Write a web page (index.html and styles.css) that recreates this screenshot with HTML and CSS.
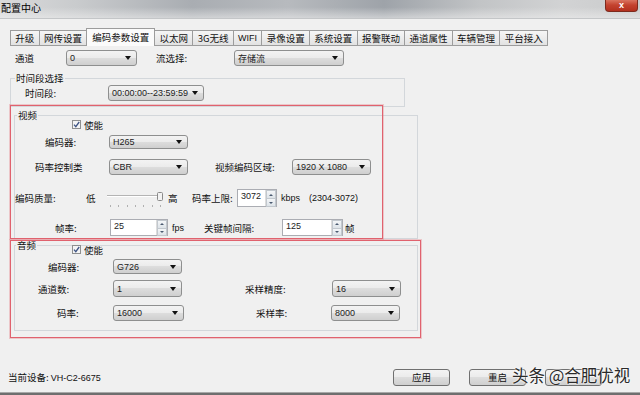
FILE: index.html
```html
<!DOCTYPE html>
<html lang="zh-CN">
<head>
  <meta charset="UTF-8" />
  <title>配置中心</title>
  <link rel="stylesheet" href="styles.css">
</head>
<body>

  <!-- ========== TITLE BAR ========== -->
  <div class="titlebar">
    <span class="title">配置中心</span>
    <span class="close">x</span>
  </div>

  <!-- ========== TABS ========== -->
  <div class="tabs">
    <span class="tab">升级</span>
    <span class="tab">网传设置</span>
    <span class="tab active">编码参数设置</span>
    <span class="tab">以太网</span>
    <span class="tab">3G无线</span>
    <span class="tab en">WIFI</span>
    <span class="tab">录像设置</span>
    <span class="tab">系统设置</span>
    <span class="tab">报警联动</span>
    <span class="tab">通道属性</span>
    <span class="tab">车辆管理</span>
    <span class="tab">平台接入</span>
  </div>

  <div class="panel">
    <!-- channel / stream -->
    <div class="row h16 mt4">
      <span class="lbl ml15 w51">通道</span>
      <div class="combo w71"><span>0</span><i class="arrow"></i></div>
      <span class="lbl ml19 w78">流选择:</span>
      <div class="combo w110"><span>存储流</span><i class="arrow"></i></div>
    </div>

    <!-- time range -->
    <fieldset class="group g-time">
      <legend>时间段选择</legend>
      <div class="row h16 mt1">
        <span class="lbl ml14 w83">时间段:</span>
        <div class="combo w96"><span>00:00:00--23:59:59</span><i class="arrow"></i></div>
      </div>
    </fieldset>

    <!-- video -->
    <fieldset class="group g-video">
      <legend>视频</legend>
      <div class="row h9">
        <svg class="chk ml57" viewBox="0 0 9 9"><rect x="0.5" y="0.5" width="8" height="8" fill="#f4f4f4" stroke="#8e8f8f"/><path d="M2 4.6 L3.8 6.6 L7.2 2" fill="none" stroke="#3e5484" stroke-width="1.3"/></svg>
        <span class="lbl ml3">使能</span>
      </div>
      <div class="row h14 mt6">
        <span class="lbl ml30 w64">编码器:</span>
        <div class="combo w79"><span>H265</span><i class="arrow"></i></div>
      </div>
      <div class="row h16 mt10">
        <span class="lbl ml20 w74">码率控制类</span>
        <div class="combo w79"><span>CBR</span><i class="arrow"></i></div>
        <span class="lbl ml27 w77">视频编码区域:</span>
        <div class="combo w79"><span>1920 X 1080</span><i class="arrow"></i></div>
      </div>
      <div class="row h18 mt14">
        <span class="lbl w71">编码质量:</span>
        <span class="lbl w21">低</span>
        <svg class="slider" width="56" height="18" viewBox="0 0 56 18">
          <line x1="0" y1="6.5" x2="52" y2="6.5" stroke="#b4b4b4"/>
          <line x1="0" y1="7.5" x2="52" y2="7.5" stroke="#ffffff"/>
          <g fill="#b0b0b0">
            <rect x="3" y="16" width="1" height="2"/><rect x="11" y="16" width="1" height="2"/>
            <rect x="20" y="16" width="1" height="2"/><rect x="28" y="16" width="1" height="2"/>
            <rect x="36" y="16" width="1" height="2"/><rect x="45" y="16" width="1" height="2"/>
            <rect x="53" y="16" width="1" height="2"/>
          </g>
          <rect x="50.5" y="3.5" width="5" height="8" rx="1" fill="#f2f2f2" stroke="#8a8a8a"/>
        </svg>
        <span class="lbl ml5 w24">高</span>
        <span class="lbl w45">码率上限:</span>
        <div class="spin w40"><span class="val">3072</span><span class="btns"><i class="up"></i><i class="down"></i></span></div>
        <span class="lbl en ml4">kbps</span>
        <span class="lbl en ml9">(2304-3072)</span>
      </div>
      <div class="row h17 mt12">
        <span class="lbl ml40 w55">帧率:</span>
        <div class="spin w58"><span class="val">25</span><span class="btns"><i class="up"></i><i class="down"></i></span></div>
        <span class="lbl en ml4 w32">fps</span>
        <span class="lbl w78">关键帧间隔:</span>
        <div class="spin w61"><span class="val">125</span><span class="btns"><i class="up"></i><i class="down"></i></span></div>
        <span class="lbl ml2">帧</span>
      </div>
    </fieldset>

    <!-- audio -->
    <fieldset class="group g-audio">
      <legend>音频</legend>
      <div class="row h9 mtn5">
        <svg class="chk ml57" viewBox="0 0 9 9"><rect x="0.5" y="0.5" width="8" height="8" fill="#f4f4f4" stroke="#8e8f8f"/><path d="M2 4.6 L3.8 6.6 L7.2 2" fill="none" stroke="#3e5484" stroke-width="1.3"/></svg>
        <span class="lbl ml3">使能</span>
      </div>
      <div class="row h15 mt5">
        <span class="lbl ml33 w65">编码器:</span>
        <div class="combo w69"><span>G726</span><i class="arrow"></i></div>
      </div>
      <div class="row h17 mt6">
        <span class="lbl ml23 w75">通道数:</span>
        <div class="combo w69"><span>1</span><i class="arrow"></i></div>
        <span class="lbl ml63 w87">采样精度:</span>
        <div class="combo w69"><span>16</span><i class="arrow"></i></div>
      </div>
      <div class="row h16 mt8">
        <span class="lbl ml42 w56">码率:</span>
        <div class="combo w71"><span>16000</span><i class="arrow"></i></div>
        <span class="lbl ml72 w75">采样率:</span>
        <div class="combo w69"><span>8000</span><i class="arrow"></i></div>
      </div>
    </fieldset>

    <!-- footer -->
    <div class="row h17 footer">
      <span class="lbl ml8 status">当前设备: <span class="en">VH-C2-6675</span></span>
      <span class="btn">应用</span>
      <span class="btn">重启</span>
      <span class="btn"></span>
    </div>
  </div>

  <div class="bottom-bar"></div>

  <!-- annotation boxes + watermark (overlays) -->
  <div class="mark mark-video"></div>
  <div class="mark mark-audio"></div>
  <div class="watermark">头条 @合肥优视</div>

</body>
</html>
```

FILE: styles.css
```css
body {
  margin: 0;
  width: 640px;
  height: 395px;
  overflow: hidden;
  position: relative;
  background: #f0f0f0;
  font-family: "Noto Sans CJK SC", sans-serif;
  font-size: 9.5px;
  color: #111;
}
.en { font-family: "Liberation Sans", "Noto Sans CJK SC", sans-serif; font-size: 9px; }

/* ---------- TITLE BAR ---------- */
.titlebar {
  height: 18px;
  display: flex;
  align-items: flex-start;
  border-bottom: 1px solid #c4c6c8;
  background:
    linear-gradient(to bottom, rgba(255,255,255,0) 40%, rgba(240,240,240,.55) 100%),
    linear-gradient(to right, #d9dadb 0, #c9cbcd 12%, #a9adb2 30%, #b7babe 45%, #9ea3a9 60%, #c2c4c6 75%, #d2d3d4 88%, #c9cacb 100%);
}
.title { font-size: 10px; line-height: 16px; padding-left: 1px; color: #000; }
.close {
  margin-left: auto;
  margin-right: 2px;
  width: 33px;
  height: 12px;
  box-sizing: border-box;
  border: 1px solid #7d2a1d;
  border-top: none;
  border-radius: 0 0 4px 4px;
  background: linear-gradient(#d9735f, #c4432f 45%, #b3301e 100%);
  color: #fff;
  font: bold 9px/10px "Liberation Sans", sans-serif;
  text-align: center;
}

/* ---------- TABS ---------- */
.tabs { display: flex; align-items: flex-end; height: 18px; margin-top: 9px; padding-left: 10px; }
.tab {
  height: 16px;
  box-sizing: border-box;
  padding: 0 4.3px;
  margin-right: -1px;
  border: 1px solid #9c9c9c;
  line-height: 14px;
  white-space: nowrap;
  background: linear-gradient(#f6f6f6, #e2e2e2);
}
.tab.en { font-size: 9px; }
.tab.active { height: 18px; padding: 0 5px; line-height: 16px; background: #fbfbfb; border-bottom: none; position: relative; z-index: 1; }

/* ---------- ROWS ---------- */
.row { display: flex; align-items: center; }
.row > * { flex-shrink: 0; }
.lbl { line-height: 12px; white-space: nowrap; }

.h9 { height: 9px; } .h14 { height: 14px; } .h15 { height: 15px; } .h16 { height: 16px; }
.h17 { height: 17px; } .h18 { height: 18px; }
.mt1 { margin-top: 1px; } .mt4 { margin-top: 4px; } .mt5 { margin-top: 5px; } .mt6 { margin-top: 6px; }
.mt8 { margin-top: 8px; } .mt10 { margin-top: 10px; } .mt12 { margin-top: 12px; } .mt14 { margin-top: 14px; }
.mtn5 { margin-top: -5px; }
.ml2 { margin-left: 2px; } .ml3 { margin-left: 3px; } .ml4 { margin-left: 4px; } .ml5 { margin-left: 5px; }
.ml8 { margin-left: 8px; } .ml9 { margin-left: 9px; } .ml14 { margin-left: 14px; } .ml15 { margin-left: 15px; }
.ml19 { margin-left: 19px; } .ml20 { margin-left: 20px; } .ml23 { margin-left: 23px; } .ml27 { margin-left: 27px; }
.ml30 { margin-left: 30px; } .ml33 { margin-left: 33px; } .ml40 { margin-left: 40px; } .ml42 { margin-left: 42px; }
.ml57 { margin-left: 57px; } .ml63 { margin-left: 63px; } .ml72 { margin-left: 72px; }
.w21 { width: 21px; } .w24 { width: 24px; } .w32 { width: 32px; } .w40 { width: 40px; } .w45 { width: 45px; }
.w51 { width: 51px; } .w55 { width: 55px; } .w56 { width: 56px; } .w58 { width: 58px; } .w61 { width: 61px; }
.w64 { width: 64px; } .w65 { width: 65px; } .w69 { width: 69px; } .w71 { width: 71px; } .w74 { width: 74px; }
.w75 { width: 75px; } .w77 { width: 77px; } .w78 { width: 78px; } .w79 { width: 79px; } .w83 { width: 83px; }
.w87 { width: 87px; } .w96 { width: 96px; } .w110 { width: 110px; }

/* ---------- GROUP BOXES ---------- */
.group { margin: 0; padding: 0; min-width: 0; box-sizing: border-box; border: 1px solid #d3d7db; }
.group legend { padding: 0 1px; }
.g-time  { margin: 6px 0 0 10px; width: 395px; padding-bottom: 5px; }
.g-time legend { margin-left: 4px; line-height: 12px; }
.g-video { margin: 3px 0 0 14px; width: 404px; padding-bottom: 2px; }
.g-video legend { margin-left: 2px; line-height: 10px; }
.g-audio { margin: 1px 0 0 14px; width: 404px; padding-bottom: 9px; }
.g-audio legend { margin-left: 1px; line-height: 10px; }

/* ---------- CONTROLS ---------- */
.combo {
  height: 100%;
  box-sizing: border-box;
  display: flex;
  align-items: center;
  padding-left: 3px;
  border: 1px solid #8e8f8f;
  border-radius: 3px;
  background: linear-gradient(#f3f3f3 0, #ebebeb 50%, #dddddd 50%, #cfcfcf 100%);
  font-family: "Liberation Sans", "Noto Sans CJK SC", sans-serif;
  font-size: 9px;
  color: #222;
  white-space: nowrap;
}
.combo .arrow {
  margin-left: auto;
  margin-right: 5px;
  width: 0; height: 0;
  border-left: 3.5px solid transparent;
  border-right: 3.5px solid transparent;
  border-top: 4px solid #111;
}

.spin {
  height: 100%;
  box-sizing: border-box;
  display: flex;
  border: 1px solid #abadb3;
  background: #fff;
  font-family: "Liberation Sans", sans-serif;
  font-size: 9px;
}
.spin .val { flex: 1; padding: 1px 0 0 3px; line-height: 10px; color: #222; }
.spin .btns { width: 10px; display: flex; flex-direction: column; border-left: 1px solid #dcdcdc; }
.spin .btns i { flex: 1; display: flex; align-items: center; justify-content: center; background: linear-gradient(#f4f6f8, #dde3e8); border: 1px solid #c2c8ce; margin: 0 0 -1px; }
.spin .btns i::after { content: ""; border-left: 2px solid transparent; border-right: 2px solid transparent; }
.spin .btns .up::after { border-bottom: 2px solid #4a5a70; }
.spin .btns .down::after { border-top: 2px solid #4a5a70; }

.chk { width: 9px; height: 9px; display: block; }
.slider { display: block; }

/* ---------- FOOTER ---------- */
.footer { margin-top: 38px; gap: 19px; }
.status { width: 366px; }
.btn {
  width: 57px;
  height: 17px;
  box-sizing: border-box;
  border: 1px solid #707070;
  border-radius: 3px;
  text-align: center;
  line-height: 15px;
  background: linear-gradient(#f3f3f3 0, #ebebeb 50%, #dddddd 50%, #cfcfcf 100%);
}
.bottom-bar { margin-top: 6px; height: 3px; background: #6e6e6e; border-top: 1px solid #a8a8a8; }

/* ---------- OVERLAYS ---------- */
.mark { position: absolute; border: 1px solid #e0626e; box-shadow: 0 0 0 1px rgba(230, 120, 130, .35); }
.mark-video { left: 10px; top: 105px; width: 371px; height: 132px; }
.mark-audio { left: 10px; top: 240px; width: 409px; height: 96px; }
.watermark {
  position: absolute;
  left: 512px;
  top: 364px;
  font-size: 16.5px;
  line-height: 22px;
  color: #2a2a2a;
  white-space: nowrap;
  text-shadow: 0 0 2px #fff, 0 0 2px #fff;
}
```
